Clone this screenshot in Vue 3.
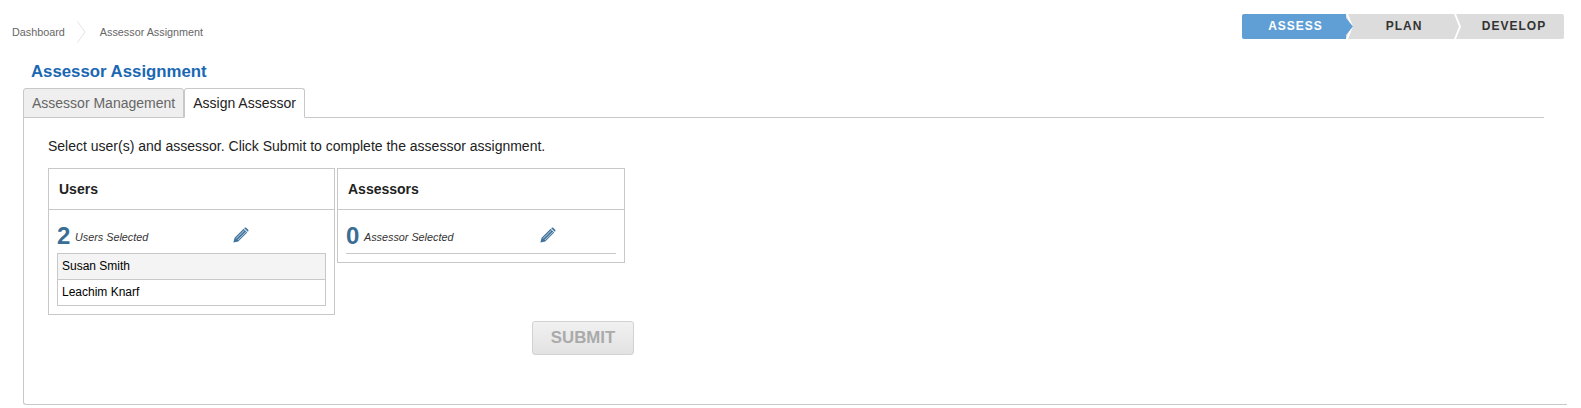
<template>
  <div class="page">
    <div class="top">
      <!-- breadcrumb -->
      <div class="crumbs">
        <span>Dashboard</span>
        <svg class="crumb-sep" width="9" height="22" viewBox="0 0 9 22">
          <path d="M0.5 0.5 L8 11 L0.5 21.5" fill="none" stroke="#e2e2ea" stroke-width="1" />
        </svg>
        <span>Assessor Assignment</span>
      </div>

      <!-- steps -->
      <div class="steps">
        <div
          v-for="(step, index) in steps"
          :key="step"
          class="step"
          :class="{ active: index === 0 }"
        >{{ step }}</div>
      </div>
    </div>

    <h1 class="title">Assessor Assignment</h1>

    <div class="tabs">
      <div class="tab">Assessor Management</div>
      <div class="tab tab-active">Assign Assessor</div>
    </div>

    <div class="panel">
      <p class="intro">Select user(s) and assessor. Click Submit to complete the assessor assignment.</p>

      <div class="cards">
        <div class="card">
          <div class="card-head">Users</div>
          <div class="card-body">
            <div class="count-row">
              <span class="count">{{ users.length }}</span>
              <span class="count-label">Users Selected</span>
              <svg class="pencil" width="16" height="16" viewBox="0 0 16 16">
                <path d="M10.6 1.8 L14.2 5.4 L5.2 14.4 L0.4 15.6 L1.6 10.8 Z" fill="#3f729b" />
                <path d="M11.6 0.8 Q12.4 0.2 13.2 0.8 L15.2 2.8 Q15.8 3.6 15.2 4.4 L14.8 4.8 L11.2 1.2 Z" fill="#3f729b" />
                <path d="M3 11.6 L11.2 3.4 M4.8 13 L13 4.8" stroke="#fff" stroke-width="0.7" />
              </svg>
            </div>
            <div class="user-list">
              <div v-for="user in users" :key="user" class="user-row">{{ user }}</div>
            </div>
          </div>
        </div>

        <div class="card card-small">
          <div class="card-head">Assessors</div>
          <div class="card-body">
            <div class="count-row count-row-line">
              <span class="count">0</span>
              <span class="count-label">Assessor Selected</span>
              <svg class="pencil" width="16" height="16" viewBox="0 0 16 16">
                <path d="M10.6 1.8 L14.2 5.4 L5.2 14.4 L0.4 15.6 L1.6 10.8 Z" fill="#3f729b" />
                <path d="M11.6 0.8 Q12.4 0.2 13.2 0.8 L15.2 2.8 Q15.8 3.6 15.2 4.4 L14.8 4.8 L11.2 1.2 Z" fill="#3f729b" />
                <path d="M3 11.6 L11.2 3.4 M4.8 13 L13 4.8" stroke="#fff" stroke-width="0.7" />
              </svg>
            </div>
          </div>
        </div>
      </div>

      <div class="actions">
        <button class="submit" disabled>SUBMIT</button>
      </div>
    </div>
  </div>
</template>

<script setup>
const steps = ['ASSESS', 'PLAN', 'DEVELOP']
const users = ['Susan Smith', 'Leachim Knarf']
</script>

<style>
body {
  background: #fff;
}
</style>

<style scoped>
.page {
  width: 1581px;
  height: 408px;
  overflow: hidden;
  box-sizing: border-box;
  font-family: 'Liberation Sans', Arial, sans-serif;
  color: #222;
}

.top {
  display: flex;
  justify-content: space-between;
  padding: 14px 17px 0 12px;
  height: 45px;
  box-sizing: border-box;
}

/* Хлебные крошки */
.crumbs {
  display: flex;
  align-items: center;
  height: 36px;
  font-size: 10.8px;
  color: #666;
}
.crumb-sep {
  margin: 0 14px 0 12px;
}

/* Шаги */
.steps {
  display: flex;
  height: 25px;
}
.step {
  position: relative;
  width: 108px;
  box-sizing: border-box;
  padding-left: 8px;
  background: #dcdcdc;
  color: #333;
  font-size: 12px;
  font-weight: bold;
  letter-spacing: 1px;
  line-height: 25px;
  text-align: center;
}
.step:first-child {
  border-radius: 2px 0 0 2px;
  width: 104px;
  padding-left: 3px;
}
.step:last-child {
  border-radius: 0 2px 2px 0;
  width: 110px;
  padding-left: 10px;
}
.step.active {
  background: #5f9fd6;
  color: #fff;
}
.step + .step::before {
  content: '';
  position: absolute;
  left: 0;
  top: 0;
  width: 7px;
  height: 25px;
  background: #fff;
  clip-path: polygon(0 0, 2px 0, 7px 50%, 2px 100%, 0 100%, 5px 50%);
}
.step.active::after {
  content: '';
  position: absolute;
  left: 100%;
  top: 4px;
  width: 7px;
  height: 17px;
  z-index: 1;
  background: #5f9fd6;
  clip-path: polygon(0 0, 100% 50%, 0 100%);
}

.title {
  margin: 0 0 0 31px;
  padding-top: 17px;
  height: 26px;
  font-size: 16.8px;
  line-height: 19px;
  font-weight: bold;
  color: #1a67b3;
}

/* Вкладки */
.tabs {
  display: flex;
  margin: 0 37px 0 23px;
  height: 29px;
  border-bottom: 1px solid #c8c8c8;
}
.tab {
  padding: 0 8px;
  height: 30px;
  box-sizing: border-box;
  border: 1px solid #c8c8c8;
  border-radius: 3px 3px 0 0;
  background: #efefef;
  color: #666;
  font-size: 14px;
  line-height: 28px;
}
.tab-active {
  background: #fff;
  color: #222;
  border-bottom-color: #fff;
}

.panel {
  margin: 0 14px 0 23px;
  height: 287px;
  box-sizing: border-box;
  border-left: 1px solid #c8c8c8;
  border-bottom: 1px solid #c8c8c8;
  border-radius: 0 0 0 3px;
  padding: 19px 0 0 24px;
}
.intro {
  margin: 0 0 13px;
  font-size: 14px;
  line-height: 18px;
  color: #222;
}

.cards {
  display: flex;
  align-items: flex-start;
  gap: 2px;
}
.card {
  width: 287px;
  box-sizing: border-box;
  border: 1px solid #c8c8c8;
}
.card-small {
  width: 288px;
}
.card-head {
  height: 40px;
  padding-left: 10px;
  border-bottom: 1px solid #c8c8c8;
  font-size: 14px;
  font-weight: bold;
  line-height: 40px;
  color: #222;
}
.card-body {
  padding: 13px 8px 8px;
}

.count-row {
  display: flex;
  align-items: flex-start;
  height: 28px;
  position: relative;
}
.count-row-line {
  border-bottom: 1px solid #c8c8c8;
  height: 30px;
}
.count {
  width: 17px;
  font-size: 24px;
  font-weight: bold;
  line-height: 26px;
  color: #3a6d94;
}
.count-label {
  margin-left: 1px;
  padding-top: 7px;
  font-size: 10.8px;
  font-style: italic;
  line-height: 14px;
  color: #333;
}
.pencil {
  position: absolute;
  left: 176px;
  top: 4px;
}
.count-row-line .pencil {
  left: 194px;
}

.user-list {
  border: 1px solid #c8c8c8;
  margin-top: 2px;
}
.user-row {
  height: 25px;
  padding-left: 4px;
  font-size: 12px;
  line-height: 25px;
  color: #000;
}
.user-row:first-child {
  background: #f4f4f4;
  border-bottom: 1px solid #c8c8c8;
}

.actions {
  margin: 6px 0 0 484px;
}
.submit {
  display: block;
  width: 102px;
  height: 34px;
  border: 1px solid #d2d2d2;
  border-radius: 3px;
  background: linear-gradient(#f1f1f1, #e2e2e2);
  color: #aaa;
  font-family: inherit;
  font-size: 16.8px;
  font-weight: bold;
  padding: 0;
}
</style>
